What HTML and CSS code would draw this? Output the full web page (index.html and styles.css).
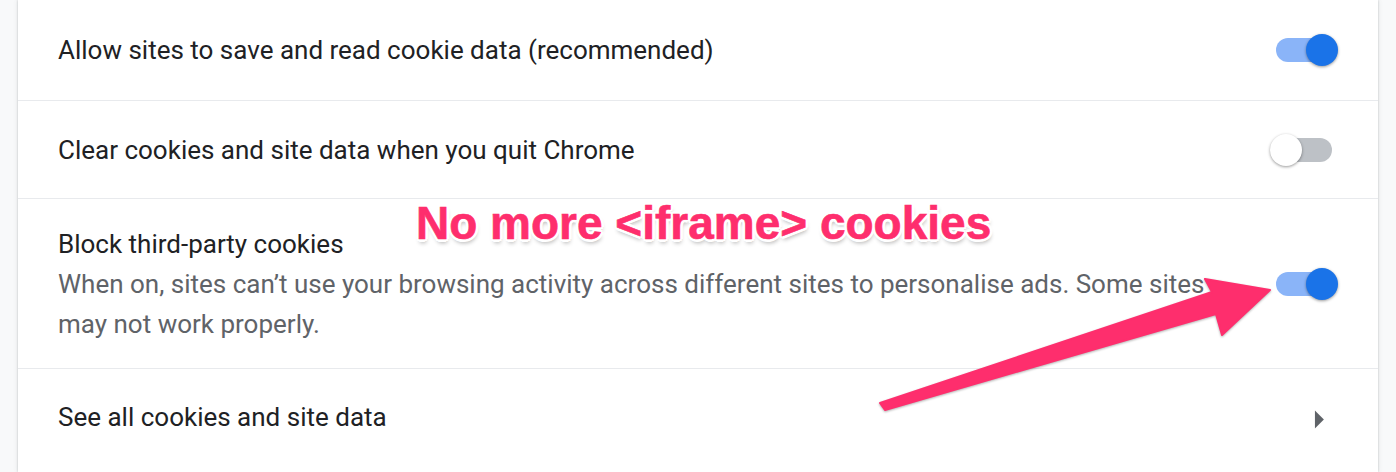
FILE: index.html
```html
<!DOCTYPE html>
<html>
<head>
<meta charset="utf-8">
<link rel="stylesheet" href="styles.css">
</head>
<body>
<div class="page">
  <div class="card">
    <div class="row row-1">
      <div class="label">Allow sites to save and read cookie data (recommended)</div>
      <div class="toggle on"><span class="bar"></span><span class="knob"></span></div>
    </div>
    <div class="row row-2">
      <div class="label">Clear cookies and site data when you quit Chrome</div>
      <div class="toggle"><span class="bar"></span><span class="knob"></span></div>
    </div>
    <div class="row row-3">
      <div class="text">
        <div class="label">Block third-party cookies</div>
        <div class="secondary">When on, sites can’t use your browsing activity across different sites to personalise ads. Some sites may not work properly.</div>
      </div>
      <div class="toggle on"><span class="bar"></span><span class="knob"></span></div>
    </div>
    <div class="row row-4">
      <div class="label">See all cookies and site data</div>
      <svg class="chevron" viewBox="0 0 24 24" width="43" height="43"><path d="M10 17l5-5-5-5v10z" fill="#5f6368"/></svg>
    </div>
  </div>
  <div class="annotation">No more &lt;iframe&gt; cookies</div>
  <svg class="arrow" width="1396" height="472" viewBox="0 0 1396 472">
    <polygon points="880,403 1212,292 1205,279 1270,290 1222,335 1216,314 885,410" fill="#fe2e6d" stroke="#fe2e6d" stroke-width="2" stroke-linejoin="round"/>
  </svg>
</div>
</body>
</html>
```
FILE: styles.css
```css
html, body {
  margin: 0;
  padding: 0;
  background: #f8f9fa;
  overflow: hidden;
}
.page {
  position: relative;
  width: 1396px;
  height: 472px;
  padding: 0 18px;
  box-sizing: border-box;
}
.card {
  background: #fff;
  height: 100%;
  box-shadow: 0 0 2px rgba(60,64,67,0.25), 0 0 5px rgba(60,64,67,0.12);
  font-family: Roboto, "Liberation Sans", sans-serif;
  color: #202124;
}
.row {
  display: flex;
  align-items: center;
  padding: 0 40px;
  border-bottom: 1px solid #e8eaed;
}
.row-1 { height: 100px; }
.row-2 { height: 97px; }
.row-3 { height: 170px; box-sizing: border-box; padding-top: 1px; }
.row-4 { height: 100px; border-bottom: none; padding-top: 0; }
.label {
  font-size: 26px;
  line-height: 40px;
  flex: 1;
}
.row-4 .label { margin-top: -4px; }
.text {
  flex: 1;
  margin-right: 48px;
}
.secondary {
  font-size: 26px;
  line-height: 40px;
  color: #5f6368;
}
.toggle {
  position: relative;
  width: 68px;
  height: 32px;
  flex: none;
}
.toggle .bar {
  position: absolute;
  left: 6px;
  top: 4px;
  width: 56px;
  height: 24px;
  border-radius: 12px;
  background: #bdc1c6;
}
.toggle .knob {
  position: absolute;
  left: 0;
  top: 0;
  width: 32px;
  height: 32px;
  border-radius: 50%;
  background: #fff;
  box-shadow: 0 1px 3px rgba(0,0,0,0.4);
}
.toggle.on .bar { background: #8ab4f8; }
.toggle.on .knob { left: 36px; background: #1a73e8; }
.chevron {
  flex: none;
  margin-right: -2px;
}
.annotation {
  position: absolute;
  left: 416px;
  top: 197px;
  font-family: "Liberation Sans", Arial, sans-serif;
  font-weight: bold;
  font-size: 46px;
  line-height: 52px;
  color: #fe2e6d;
  -webkit-text-stroke: 0.6px #fe2e6d;
  text-shadow: 2px 0 0 #fff, -2px 0 0 #fff, 0 2px 0 #fff, 0 -2px 0 #fff,
    2px 2px 0 #fff, -2px 2px 0 #fff, 2px -2px 0 #fff, -2px -2px 0 #fff,
    3px 0 0 #fff, -3px 0 0 #fff, 0 3px 0 #fff, 0 -3px 0 #fff,
    1px 4px 4px rgba(0,0,0,0.3);
  white-space: nowrap;
}
.arrow {
  position: absolute;
  left: 0;
  top: 0;
  filter: drop-shadow(0 1px 1px rgba(0,0,0,0.3));
}
```
